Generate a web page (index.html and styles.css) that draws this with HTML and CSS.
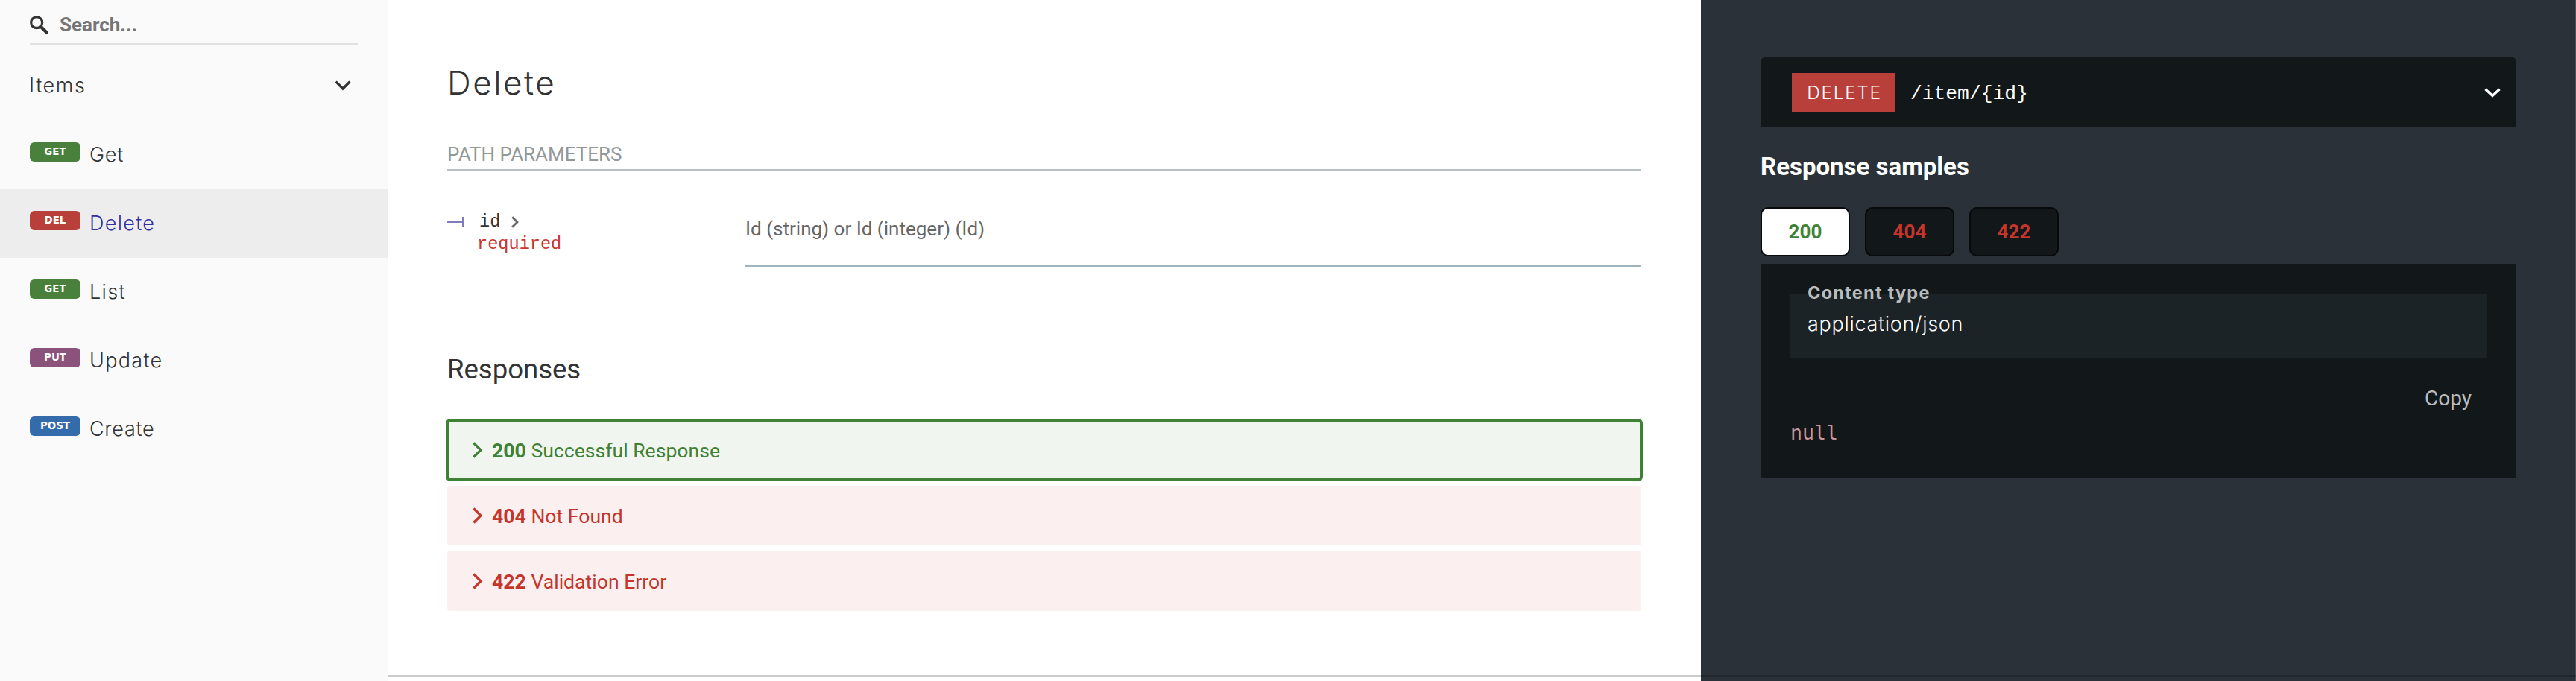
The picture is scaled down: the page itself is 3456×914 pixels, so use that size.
FILE: index.html
```html
<!DOCTYPE html>
<html lang="en">
<head>
<meta charset="utf-8">
<title>Delete</title>
<link rel="stylesheet" href="styles.css">
</head>
<body>
<div class="page">
  <nav class="sidebar">
    <div class="search">
      <svg class="search-icon" viewBox="0 0 25 25"><circle cx="9.2" cy="9.2" r="7.5" fill="none" stroke="#333" stroke-width="3.2"/><path d="M14.6 14.6 L22.8 22.8" stroke="#333" stroke-width="4.4" stroke-linecap="round"/></svg>
      <span>Search...</span>
    </div>
    <div class="group">
      <span class="group-label">Items</span>
      <svg class="group-chevron" viewBox="0 0 22 14"><path d="M1.6 1.6 L11 11 L20.4 1.6" fill="none" stroke="#333" stroke-width="3.4"/></svg>
    </div>
    <ul class="menu">
      <li class="item"><span class="badge get">GET</span><span class="label tight">Get</span></li>
      <li class="item active"><span class="badge del">DEL</span><span class="label">Delete</span></li>
      <li class="item"><span class="badge get">GET</span><span class="label">List</span></li>
      <li class="item"><span class="badge put">PUT</span><span class="label">Update</span></li>
      <li class="item"><span class="badge post">POST</span><span class="label tight">Create</span></li>
    </ul>
  </nav>
  <main class="content">
    <h1>Delete</h1>
    <h5>PATH PARAMETERS</h5>
    <div class="param">
      <div class="param-name">
        <svg class="connector" viewBox="0 0 22 14"><path d="M0 7 H21 M21 0 V14" stroke="#7d7dbd" stroke-width="2" fill="none"/></svg>
        <div class="param-text">
          <div class="name">id<svg class="name-chevron" viewBox="0 0 10 16"><path d="M1.2 1.2 L8 8 L1.2 14.8" fill="none" stroke="#666" stroke-width="2.8"/></svg></div>
          <div class="required">required</div>
        </div>
      </div>
      <div class="param-type">Id (string) or Id (integer) (Id)</div>
    </div>
    <h3>Responses</h3>
    <div class="responses">
      <div class="response ok"><svg class="chevron" viewBox="0 0 13 22"><path d="M1.5 1.5 L11 11 L1.5 20.5" fill="none" stroke="currentColor" stroke-width="3.2"/></svg><span><b>200</b> Successful Response</span></div>
      <div class="response error"><svg class="chevron" viewBox="0 0 13 22"><path d="M1.5 1.5 L11 11 L1.5 20.5" fill="none" stroke="currentColor" stroke-width="3.2"/></svg><span><b>404</b> Not Found</span></div>
      <div class="response error"><svg class="chevron" viewBox="0 0 13 22"><path d="M1.5 1.5 L11 11 L1.5 20.5" fill="none" stroke="currentColor" stroke-width="3.2"/></svg><span><b>422</b> Validation Error</span></div>
    </div>
  </main>
  <aside class="samples">
    <div class="endpoint">
      <span class="verb">DELETE</span>
      <span class="path">/item/{id}</span>
      <svg class="endpoint-chevron" viewBox="0 0 22 14"><path d="M1.5 1.8 L11 10.5 L20.5 1.8" fill="none" stroke="#fff" stroke-width="3.4"/></svg>
    </div>
    <h4>Response samples</h4>
    <div class="tabs">
      <span class="tab selected">200</span>
      <span class="tab">404</span>
      <span class="tab">422</span>
    </div>
    <div class="panel">
      <div class="mime"><span class="mime-label">Content type</span>application/json</div>
      <div class="copy">Copy</div>
      <div class="code">null</div>
    </div>
  </aside>
  <div class="divider"></div>
</div>
</body>
</html>
```
FILE: styles.css
```css
* { box-sizing: border-box; }
body { margin: 0; font-family: Roboto, "Liberation Sans", sans-serif; font-size: 26px; color: #333; }
h1, h3, h4, h5, ul { margin: 0; padding: 0; font-weight: 400; }
svg { display: block; flex: none; overflow: visible; }
.page { position: relative; display: flex; width: 3456px; height: 914px; overflow: hidden; background: #fff; }

.sidebar { width: 520px; background: #fafafa; }
.search { display: flex; align-items: center; gap: 15px; height: 60px; margin: 0 40px; padding-top: 8px; border-bottom: 2px solid #e1e1e1; font-weight: 700; color: #767676; }
.search-icon { width: 25px; height: 25px; }
.group { display: flex; align-items: center; justify-content: space-between; height: 92px; margin: 9px 0 1px; padding: 0 49px 0 39px; }
.group-label { font: 300 27px/92px Inter, sans-serif; letter-spacing: 1.6px; }
.group-chevron { width: 22px; height: 14px; }
.menu { list-style: none; }
.item { display: flex; gap: 12px; height: 92px; padding-left: 40px; }
.active { background: #ededed; color: #32329f; }
.badge { width: 68px; height: 26px; margin-top: 29px; border-radius: 6px; font: bold 13.4px/26px "DejaVu Sans", sans-serif; text-align: center; color: #fff; }
.get { background: #48803c; }
.del { background: #b9403a; }
.put { background: #8b537b; }
.post { background: #346cab; }
.label { font: 300 27px/91px Inter, sans-serif; letter-spacing: 1.3px; }
.tight { letter-spacing: .7px; }

.content { width: 1762px; padding: 80px 80px 0; }
h1 { font: 300 44px/62px Inter, sans-serif; letter-spacing: 2.5px; height: 60px; }
h5 { height: 40px; margin-top: 49px; border-bottom: 2px solid #b7bec2; font-size: 26px; line-height: 36px; color: #939899; }
.param { display: flex; height: 129px; }
.param-name { display: flex; width: 400px; padding-top: 54px; }
.connector { width: 22px; height: 14px; margin: 8px 18px 0 0; }
.param-text { font-family: "Liberation Mono", monospace; font-size: 23.6px; line-height: 30px; }
.name { display: flex; align-items: center; padding-left: 3px; }
.name-chevron { width: 10px; height: 16px; margin-left: 15px; }
.required { color: #c8352b; }
.param-type { flex: 1; padding-top: 60px; border-bottom: 2px solid #9fb4be; line-height: 36px; color: #666; }
h3 { margin-top: 114px; font-size: 36.5px; line-height: 48px; }
.responses { display: flex; flex-direction: column; gap: 8px; margin-top: 44px; }
.response { display: flex; align-items: center; gap: 13px; height: 80px; padding-left: 34px; border-radius: 4px; font-size: 26.6px; }
.chevron { width: 13px; height: 22px; }
.ok { background: #f0f5f0; color: #3f8135; outline: 4px solid #3f8135; outline-offset: -2px; }
.error { background: #fbf0ef; color: #c6352b; }

.samples { width: 1174px; padding: 76px 78px 0 80px; border-right: 2px solid #4b5357; background: #2a3138; color: #fff; }
.endpoint { display: flex; height: 94px; padding: 22px 21px 20px 42px; border-radius: 8px 8px 0 0; background: #121719; }
.verb { width: 139px; background: #b9403a; font: 300 24.5px/52px Inter, sans-serif; letter-spacing: 1.6px; text-align: center; text-indent: 2px; }
.path { flex: 1; padding-left: 20px; font: 26.3px/57px "Liberation Mono", monospace; }
.endpoint-chevron { width: 22px; height: 14px; margin-top: 20px; }
h4 { margin-top: 31px; font-size: 33px; font-weight: 700; line-height: 45px; }
.tabs { display: flex; gap: 20px; margin-top: 32px; }
.tab { width: 120px; height: 66px; border: 2px solid #07090b; border-radius: 10px; background: #121719; font-weight: 700; line-height: 62px; text-align: center; color: #c6352b; }
.selected { background: #fff; color: #3f8135; }
.panel { height: 288px; margin-top: 10px; padding: 40px; background: #121719; }
.mime { position: relative; height: 86px; padding-left: 23px; background: #1c2326; font: 300 27px/82px Inter, sans-serif; letter-spacing: .7px; }
.mime-label { position: absolute; left: 23px; top: -16px; font: 700 23.5px/30px Inter, sans-serif; letter-spacing: 1.25px; color: #b9bbbc; }
.copy { margin-top: 37px; padding-right: 20px; font-size: 28px; line-height: 36px; text-align: right; color: #b9bbbc; }
.code { margin-top: 10px; font: 26.6px/36px "DejaVu Sans Mono", monospace; color: #c5949c; }

/* section rule that crosses both columns */
.divider { position: absolute; left: 520px; right: 0; top: 906px; height: 2px; background: rgba(0, 0, 0, .2); }
```
